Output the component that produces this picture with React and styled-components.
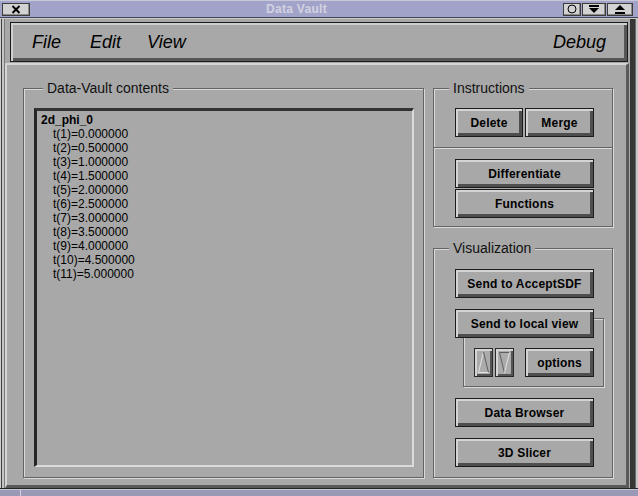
import React from 'react';
import styled, { createGlobalStyle } from 'styled-components';

const GREY = '#a8a8a8';
const LIGHT = '#dadada';
const SHADE = '#646464';

const GlobalStyle = createGlobalStyle`
  html, body {
    margin: 0;
    padding: 0;
    background: ${GREY};
  }
  body {
    font-family: "Liberation Sans", Arial, sans-serif;
  }
`;

const Window = styled.div`
  width: 638px;
  height: 496px;
  display: flex;
  flex-direction: column;
  background: ${GREY};
  overflow: hidden;
`;

const TitleBar = styled.div`
  box-sizing: border-box;
  height: 18px;
  flex: none;
  display: flex;
  align-items: center;
  padding: 0 5px 0 2px;
  background: #a2a3c8;
  border-top: 1px solid #c8c8d8;
  border-bottom: 1px solid #45455a;
`;

const TitleText = styled.div`
  flex: 1;
  text-align: center;
  font-size: 12px;
  font-weight: bold;
  letter-spacing: 0.3px;
  color: #d2d2e2;
`;

const TitleButtons = styled.div`
  display: flex;
  gap: 1px;
`;

const TitleBtn = styled.div`
  box-sizing: border-box;
  width: ${p => p.$w}px;
  height: 13px;
  display: flex;
  align-items: center;
  justify-content: center;
  background: #d2d2d2;
  border: 1px solid #3c3c3c;
  box-shadow: inset -1px -1px 0 #8a8a8a;
`;

const Frame = styled.div`
  flex: 1;
  display: flex;
  flex-direction: column;
  padding: 4px 9px 0 5px;
  box-shadow:
    inset 0 1px 0 #c8c8c8,
    inset 1px 0 0 #cfcfcf,
    inset 2px 0 0 #404040,
    inset 4px 0 0 #c4c4c4,
    inset 5px 0 0 #7a7a7a,
    inset -2px 0 0 #c4c4c4,
    inset -3px 0 0 #6a6a6a,
    inset -8px 0 0 #363636,
    inset -9px 0 0 ${GREY};
`;

const MenuBar = styled.div`
  box-sizing: border-box;
  height: 40px;
  flex: none;
  margin: 0 1px 0 5px;
  display: flex;
  align-items: center;
  padding: 0 21px;
  border: 1px solid #1a1a1a;
  box-shadow: inset 2px 2px 0 #d0d0d0, inset -3px -3px 0 #565656;
`;

const MenuItem = styled.span`
  font-size: 18px;
  font-style: italic;
  color: #000;
  margin-right: ${p => p.$gap || 0}px;
  margin-left: ${p => (p.$right ? 'auto' : '0')};
`;

const MainPanel = styled.div`
  box-sizing: border-box;
  flex: 1;
  margin-top: 1px;
  display: flex;
  gap: 9px;
  padding: 23px 12px 7px 16px;
  border-style: solid;
  border-width: 2px 3px 3px 2px;
  border-color: #d4d4d4 #5a5a5a #5a5a5a #d4d4d4;
`;

const Group = styled.div`
  position: relative;
  box-sizing: border-box;
  border: 1px solid ${SHADE};
  box-shadow: inset 1px 1px 0 ${LIGHT}, 1px 1px 0 ${LIGHT};
`;

const ContentsGroup = styled(Group)`
  width: 401px;
  flex: none;
  display: flex;
  flex-direction: column;
  padding: 19px 9px 10px 10px;
`;

const Legend = styled.span`
  position: absolute;
  top: -9px;
  left: ${p => p.$left}px;
  padding: 0 4px;
  background: ${GREY};
  font-size: 14px;
  line-height: 16px;
  color: #111;
  white-space: nowrap;
`;

const ListBox = styled.div`
  flex: 1;
  padding: 2px 4px;
  border-style: solid;
  border-width: 3px 2px 2px 3px;
  border-color: #333 ${LIGHT} ${LIGHT} #262626;
  font-size: 12px;
  line-height: 14px;
  color: #000;
`;

const ListHead = styled.div`
  font-weight: bold;
`;

const ListRow = styled.div`
  padding-left: 12px;
`;

const RightColumn = styled.div`
  width: 181px;
  flex: none;
  display: flex;
  flex-direction: column;
  gap: 21px;
`;

const SideGroup = styled(Group)`
  width: 180px;
  flex: ${p => (p.$grow ? 1 : 'none')};
`;

const Section = styled.div`
  display: flex;
  flex-direction: column;
  gap: 1px;
  padding: ${p => p.$pad};
`;

const Row = styled.div`
  display: flex;
  gap: 2px;
`;

const Separator = styled.div`
  height: 0;
  border-top: 1px solid ${SHADE};
  border-bottom: 1px solid ${LIGHT};
`;

const VisBody = styled.div`
  display: flex;
  flex-direction: column;
  align-items: flex-start;
  gap: 11px;
  padding: 20px 0 0 21px;
`;

const Button = styled.button`
  position: relative;
  z-index: 1;
  box-sizing: border-box;
  width: ${p => p.$w || 139}px;
  height: 29px;
  margin: 0;
  padding: 0;
  background: ${GREY};
  border: 1px solid #1c1c1c;
  box-shadow: inset 2px 2px 0 #d4d4d4, inset -3px -3px 0 #4e4e4e;
  font-family: "Liberation Sans", Arial, sans-serif;
  font-size: 12px;
  font-weight: bold;
  letter-spacing: 0.2px;
  color: #000;
`;

const LocalWrap = styled.div`
  display: flex;
  flex-direction: column;
`;

const SubFrame = styled(Group)`
  width: 141px;
  margin: -20px 0 0 8px;
  padding: 29px 9px 9px 10px;
  display: flex;
  justify-content: space-between;
`;

const Arrows = styled.div`
  display: flex;
  gap: 2px;
`;

const ArrowBtn = styled.div`
  box-sizing: border-box;
  width: 19px;
  height: 29px;
  display: flex;
  align-items: center;
  justify-content: center;
  background: #ababab;
  border: 1px solid #2a2a2a;
  box-shadow: inset 2px 2px 0 #d4d4d4, inset -2px -2px 0 #555;
`;

const BottomStrip = styled.div`
  box-sizing: border-box;
  height: 8px;
  flex: none;
  display: flex;
  background: #9a9ab6;
  border-top: 1px solid #262626;
  box-shadow: inset 0 1px 0 #c4c4d8;
`;

const BottomCorner = styled.div`
  width: 20px;
  border-right: 1px solid #d0d0e0;
`;

const entries = Array.from({ length: 11 }, (_, i) => `t(${i + 1})=${(i * 0.5).toFixed(6)}`);

function UpArrow() {
  return (
    <svg width="13" height="23" viewBox="0 0 13 23">
      <line x1="6.5" y1="1" x2="1.5" y2="21.5" stroke="#e4e4e4" strokeWidth="1" />
      <line x1="6.5" y1="1" x2="11.5" y2="21.5" stroke="#5e5e5e" strokeWidth="1" />
      <line x1="1.5" y1="21.5" x2="11.5" y2="21.5" stroke="#e4e4e4" strokeWidth="1" />
    </svg>
  );
}

function DownArrow() {
  return (
    <svg width="13" height="23" viewBox="0 0 13 23">
      <line x1="1.5" y1="1.5" x2="11.5" y2="1.5" stroke="#5e5e5e" strokeWidth="1" />
      <line x1="1.5" y1="1.5" x2="6.5" y2="22" stroke="#5e5e5e" strokeWidth="1" />
      <line x1="11.5" y1="1.5" x2="6.5" y2="22" stroke="#e4e4e4" strokeWidth="1" />
    </svg>
  );
}

export default function App() {
  return (
    <Window>
      <GlobalStyle />
      <TitleBar>
        <TitleBtn $w={28}>
          <svg width="10" height="9" viewBox="0 0 10 9">
            <path d="M1.5 1 L8.5 8 M8.5 1 L1.5 8" stroke="#000" strokeWidth="2" />
          </svg>
        </TitleBtn>
        <TitleText>Data Vault</TitleText>
        <TitleButtons>
          <TitleBtn $w={18}>
            <svg width="10" height="10" viewBox="0 0 10 10">
              <circle cx="5" cy="5" r="4" fill="none" stroke="#000" strokeWidth="1" />
            </svg>
          </TitleBtn>
          <TitleBtn $w={24}>
            <svg width="12" height="9" viewBox="0 0 12 9">
              <rect x="1" y="0" width="10" height="2" fill="#000" />
              <polygon points="1,3 11,3 6,8" fill="#000" />
            </svg>
          </TitleBtn>
          <TitleBtn $w={26}>
            <svg width="12" height="9" viewBox="0 0 12 9">
              <polygon points="1,5 11,5 6,0" fill="#000" />
              <rect x="1" y="7" width="10" height="2" fill="#000" />
            </svg>
          </TitleBtn>
        </TitleButtons>
      </TitleBar>

      <Frame>
        <MenuBar>
          <MenuItem $gap={29}>File</MenuItem>
          <MenuItem $gap={26}>Edit</MenuItem>
          <MenuItem>View</MenuItem>
          <MenuItem $right>Debug</MenuItem>
        </MenuBar>

        <MainPanel>
          <ContentsGroup>
            <Legend $left={19}>Data-Vault contents</Legend>
            <ListBox>
              <ListHead>2d_phi_0</ListHead>
              {entries.map(e => (
                <ListRow key={e}>{e}</ListRow>
              ))}
            </ListBox>
          </ContentsGroup>

          <RightColumn>
            <SideGroup>
              <Legend $left={15}>Instructions</Legend>
              <Section $pad="19px 0 10px 21px">
                <Row>
                  <Button $w={68}>Delete</Button>
                  <Button $w={69}>Merge</Button>
                </Row>
              </Section>
              <Separator />
              <Section $pad="10px 0 8px 21px">
                <Button>Differentiate</Button>
                <Button>Functions</Button>
              </Section>
            </SideGroup>

            <SideGroup $grow>
              <Legend $left={15}>Visualization</Legend>
              <VisBody>
                <Button>Send to AcceptSDF</Button>
                <LocalWrap>
                  <Button>Send to local view</Button>
                  <SubFrame>
                    <Arrows>
                      <ArrowBtn><UpArrow /></ArrowBtn>
                      <ArrowBtn><DownArrow /></ArrowBtn>
                    </Arrows>
                    <Button $w={69}>options</Button>
                  </SubFrame>
                </LocalWrap>
                <Button>Data Browser</Button>
                <Button>3D Slicer</Button>
              </VisBody>
            </SideGroup>
          </RightColumn>
        </MainPanel>
      </Frame>

      <BottomStrip>
        <BottomCorner />
      </BottomStrip>
    </Window>
  );
}
